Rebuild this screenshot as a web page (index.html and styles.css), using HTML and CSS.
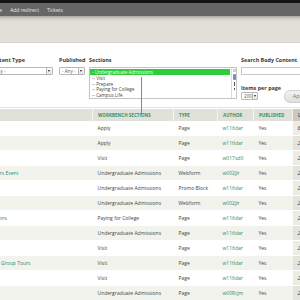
FILE: index.html
```html
<!DOCTYPE html>
<html>
<head>
<meta charset="utf-8">
<link rel="stylesheet" href="styles.css">
</head>
<body>
<div class="topline"></div>
<div class="toolbar">
  <a class="tlink">Home</a>
  <a class="tlink">Add redirect</a>
  <a class="tlink">Tickets</a>
</div>
<div class="shade"></div>
<form class="filters">
  <div class="fitem ctype">
    <label class="flabel">Content Type</label>
    <div class="select w-ctype"><span>- Any -</span><i class="arrow"></i></div>
  </div>
  <div class="fitem pub">
    <label class="flabel">Published</label>
    <div class="select w-pub"><span>- Any -</span><i class="arrow"></i></div>
  </div>
  <div class="fitem">
    <label class="flabel">Sections</label>
    <div class="multi">
      <div class="opts">
        <div class="opt sel">- Undergraduate Admissions</div>
        <div class="redline"></div>
        <div class="opt">-- Visit</div>
        <div class="opt">-- Prepare</div>
        <div class="opt">-- Paying for College</div>
        <div class="opt">-- Campus Life</div>
      </div>
      <div class="scroll">
        <i class="sup"></i>
        <i class="thumb"></i>
        <i class="sdots"></i>
        <i class="sdown"></i>
      </div>
    </div>
    <div class="redvert"></div>
  </div>
  <div class="fitem search">
    <label class="flabel">Search Body Content</label>
    <div class="textbox"></div>
    <div class="perpage">
      <div class="ppcol">
        <label class="flabel">Items per page</label>
        <div class="select w-pp"><span>200</span><i class="arrow"></i></div>
      </div>
      <div class="apply">Apply</div>
    </div>
  </div>
</form>
<table class="grid">
  <thead>
    <tr>
      <th class="c-title">Title</th>
      <th class="c-sec">Workbench Sections</th>
      <th class="c-type">Type</th>
      <th class="c-auth">Author</th>
      <th class="c-pub">Published</th>
      <th class="c-last sorted">Last updated</th>
    </tr>
  </thead>
  <tbody>
    <tr><td class="t">How to Apply</td><td>Apply</td><td>Page</td><td class="a">w116dar</td><td>Yes</td><td class="l">6 days ago</td></tr>
    <tr><td class="t">Apply Now</td><td>Apply</td><td>Page</td><td class="a">w116dar</td><td>Yes</td><td class="l">2 weeks ago</td></tr>
    <tr><td class="t">Visit Us</td><td>Visit</td><td>Page</td><td class="a">w017sd0</td><td>Yes</td><td class="l">2 weeks ago</td></tr>
    <tr><td class="t">Fall Admissions Visitors Event</td><td>Undergraduate Admissions</td><td>Webform</td><td class="a">w002jlr</td><td>Yes</td><td class="l">2 weeks ago</td></tr>
    <tr><td class="t">Promo</td><td>Undergraduate Admissions</td><td>Promo Block</td><td class="a">w116dar</td><td>Yes</td><td class="l">2 weeks ago</td></tr>
    <tr><td class="t">Contact</td><td>Undergraduate Admissions</td><td>Webform</td><td class="a">w002jlr</td><td>Yes</td><td class="l">2 weeks ago</td></tr>
    <tr><td class="t">Scholarship Applications</td><td>Paying for College</td><td>Page</td><td class="a">w116dar</td><td>Yes</td><td class="l">2 weeks ago</td></tr>
    <tr><td class="t">Admissions</td><td>Undergraduate Admissions</td><td>Page</td><td class="a">w116dar</td><td>Yes</td><td class="l">2 weeks ago</td></tr>
    <tr><td class="t">Directions</td><td>Visit</td><td>Page</td><td class="a">w116dar</td><td>Yes</td><td class="l">2 weeks ago</td></tr>
    <tr><td class="t">Plan &amp; Schedule Your Group Tours</td><td>Visit</td><td>Page</td><td class="a">w116dar</td><td>Yes</td><td class="l">2 weeks ago</td></tr>
    <tr><td class="t">Tours</td><td>Visit</td><td>Page</td><td class="a">w116dar</td><td>Yes</td><td class="l">2 weeks ago</td></tr>
    <tr><td class="t">Deadlines</td><td>Undergraduate Admissions</td><td>Page</td><td class="a">w008cjm</td><td>Yes</td><td class="l">2 weeks ago</td></tr>
    <tr><td class="t">Costs</td><td>Paying for College</td><td>Page</td><td class="a">w116dar</td><td>Yes</td><td class="l">3 weeks ago</td></tr>
  </tbody>
</table>
</body>
</html>
```

FILE: styles.css
```css
html, body {
  margin: 0;
  padding: 0;
  background: #ffffff;
  overflow: hidden;
  font-family: "Open Sans", "DejaVu Sans", sans-serif;
  color: #333;
}
.topline {
  height: 3px;
  background: #141414;
}
.toolbar {
  height: 13px;
  background: #666666;
  display: flex;
  align-items: center;
  gap: 8px;
  margin-left: -12px;
  font-size: 5px;
}
.tlink {
  color: #e8e8e8;
}
.shade {
  height: 26px;
  background: linear-gradient(#a9a9a2 0, #d3d3cb 3px, #e0e0d8 6px, #e0e0d8 100%);
  border-bottom: 1px solid #d6d6ce;
}
.filters {
  display: flex;
  align-items: flex-start;
  gap: 5px;
  margin: 0 0 0 -11px;
  padding: 14px 0 0 0;
  height: 50px;
  border-bottom: 1px solid #e6e6e0;
}
.fitem {
  display: flex;
  flex-direction: column;
  gap: 3px;
  position: relative;
  flex-shrink: 0;
}
.fitem.pub {
  width: 25px;
  margin-left: 1px;
}
.flabel {
  font-size: 5.4px;
  font-weight: 700;
  color: #3a3a3a;
  line-height: 7px;
  white-space: nowrap;
}
.select {
  height: 6px;
  border: 1px solid #b8b8b8;
  border-radius: 1px;
  display: flex;
  align-items: center;
  justify-content: space-between;
  font-size: 4.6px;
  color: #555;
  padding-left: 2px;
  background: #fff;
  white-space: nowrap;
}
.arrow {
  width: 5px;
  height: 6px;
  border-left: 1px solid #b8b8b8;
  background: linear-gradient(#fff, #e4e4e4);
  position: relative;
}
.arrow::after {
  content: "";
  position: absolute;
  left: 1px;
  top: 2px;
  border-left: 1.5px solid transparent;
  border-right: 1.5px solid transparent;
  border-top: 2px solid #222;
}
.w-ctype { width: 60px; }
.w-pub { width: 22px; }
.w-pp { width: 13px; }
.multi {
  width: 146px;
  height: 30px;
  border: 1px solid #c4c4c4;
  display: flex;
  background: #fff;
}
.opts {
  flex: 1;
  display: flex;
  flex-direction: column;
  padding-top: 1px;
}
.opt {
  font-size: 4.6px;
  line-height: 5.6px;
  color: #444;
  padding-left: 2px;
  white-space: nowrap;
}
.opt.sel {
  background: #2ecc3a;
  color: #f2fff2;
  line-height: 6px;
  margin-right: 1px;
}
.redline {
  height: 1px;
  width: 111px;
  background: #e02020;
  margin-bottom: 1px;
}
.redvert {
  position: absolute;
  left: 52px;
  top: 20px;
  width: 1px;
  height: 38px;
  background: #ee5b5b;
}
.scroll {
  width: 4px;
  border-left: 1px solid #dcdcdc;
  display: flex;
  flex-direction: column;
  align-items: center;
  gap: 2px;
  padding-top: 1px;
}
.sup {
  width: 3px;
  height: 3px;
  background: #d0d0d0;
}
.thumb {
  width: 3px;
  height: 6px;
  background: #7b8fb8;
  border-radius: 1px;
}
.sdots {
  width: 1px;
  height: 4px;
  background: #555;
}
.sdown {
  width: 1px;
  height: 2px;
  background: #555;
}
.search {
  margin-left: -1px;
  width: 80px;
}
.textbox {
  width: 70px;
  height: 6px;
  border: 1px solid #c8c8c8;
  background: #fff;
}
.perpage {
  display: flex;
  align-items: flex-end;
  gap: 6px;
  margin-top: 7px;
}
.ppcol {
  display: flex;
  flex-direction: column;
  gap: 0;
  width: 37px;
  flex-shrink: 0;
}
.apply {
  width: 30px;
  height: 11px;
  border-radius: 6px;
  background: linear-gradient(#f2f2f2, #dedede);
  border: 1px solid #d0d0d0;
  font-size: 5.6px;
  line-height: 11px;
  color: #777;
  text-align: center;
  margin-bottom: -3px;
  flex-shrink: 0;
}
.grid {
  border-collapse: collapse;
  margin-left: -55px;
  table-layout: fixed;
  width: 425px;
  margin-top: 1px;
}
.grid th {
  height: 12px;
  padding: 0 0 0 5px;
  background: #e1e1da;
  color: #2f8f6a;
  font-size: 4.4px;
  font-weight: 700;
  text-transform: uppercase;
  text-align: left;
  border-right: 1px solid #f4f4f0;
  letter-spacing: 0.1px;
  white-space: nowrap;
}
.grid th.sorted {
  background: #c9c9c0;
  color: #555;
}
.c-title { width: 142px; }
.c-sec { width: 75px; }
.c-type { width: 38px; }
.c-auth { width: 30px; }
.c-pub { width: 33px; }
.grid td {
  height: 14px;
  padding: 0 0 0 5px;
  font-size: 5px;
  color: #444;
  white-space: nowrap;
  overflow: visible;
  border-bottom: 1px solid #fff;
}
.grid tbody tr:nth-child(odd) td { background: #ffffff; }
.grid tbody tr:nth-child(even) td { background: #f3f3ee; }
.grid td.t, .grid td.a {
  color: #2a8a66;
}
.grid tbody tr td.l {
  background: #ececE5;
  color: #333;
  font-style: italic;
}
.grid tbody tr:nth-child(even) td.l {
  background: #e4e4dc;
}
```
